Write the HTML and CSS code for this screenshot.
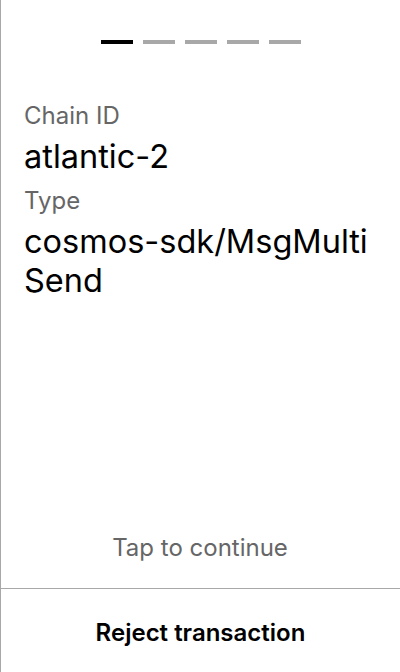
FILE: index.html
```html
<!DOCTYPE html>
<html>
<head>
<meta charset="utf-8">
<link rel="stylesheet" href="styles.css">
</head>
<body>
<div class="screen">
  <div class="main">
    <div class="steps">
      <span class="step active"></span>
      <span class="step"></span>
      <span class="step"></span>
      <span class="step"></span>
      <span class="step"></span>
    </div>
    <div class="fields">
      <div class="field">
        <div class="label">Chain ID</div>
        <div class="value">atlantic-2</div>
      </div>
      <div class="field">
        <div class="label">Type</div>
        <div class="value">cosmos-sdk/MsgMulti Send</div>
      </div>
    </div>
    <div class="tap">Tap to continue</div>
  </div>
  <div class="footer">Reject transaction</div>
</div>
</body>
</html>
```
FILE: styles.css
```css
html, body {
  margin: 0;
  padding: 0;
  background: #fff;
}
body {
  font-family: Inter, "Noto Sans", sans-serif;
  color: #000;
}
.screen {
  box-sizing: border-box;
  width: 400px;
  height: 672px;
  border-left: 1px solid #a8a8a8;
  display: flex;
  flex-direction: column;
}
.main {
  height: 588px;
  display: flex;
  flex-direction: column;
  padding: 0 24px 0 23px;
}
.steps {
  display: flex;
  justify-content: center;
  gap: 10px;
  padding-top: 40px;
  margin-left: -23px;
  margin-right: -24px;
}
.step {
  display: block;
  width: 32px;
  height: 4px;
  background: #a8a8a8;
}
.step.active {
  background: #000;
}
.fields {
  margin-top: 57px;
  display: flex;
  flex-direction: column;
  gap: 10px;
}
.field {
  display: flex;
  flex-direction: column;
  gap: 6px;
}
.label {
  font-size: 24px;
  line-height: 30px;
  color: #666;
}
.value {
  font-size: 32.5px;
  line-height: 39px;
  color: #000;
}
.tap {
  margin-top: auto;
  margin-bottom: 25px;
  text-align: center;
  font-size: 24px;
  line-height: 30px;
  color: #666;
}
.footer {
  box-sizing: border-box;
  border-top: 1px solid #a8a8a8;
  flex: 1;
  padding-top: 4px;
  display: flex;
  align-items: center;
  justify-content: center;
  font-size: 24px;
  font-weight: 600;
  color: #000;
}
```
